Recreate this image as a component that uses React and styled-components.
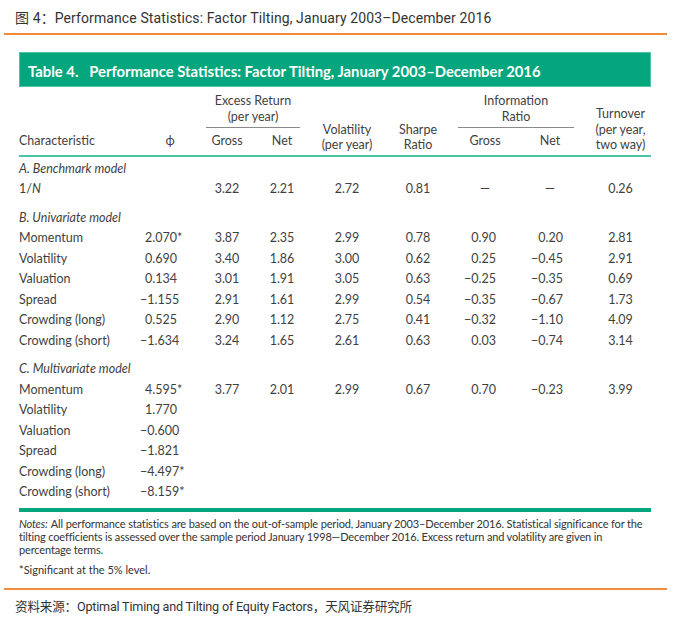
import React from 'react';
import styled, { createGlobalStyle } from 'styled-components';

const GlobalStyle = createGlobalStyle`
  html, body { margin: 0; padding: 0; background: #fff; }
  body { font-family: Lato, "Noto Sans CJK SC", sans-serif; }
`;

const Page = styled.div`
  width: 700px;
  height: 630px;
  background: #fff;
  padding-top: 8px;
  box-sizing: border-box;
`;

const Caption = styled.div`
  margin-left: 15px;
  font-family: Roboto, "Noto Sans CJK SC", sans-serif;
  font-size: 14px;
  line-height: 20px;
  color: #333;
  letter-spacing: 0.1px;
`;

const Rule = styled.div`
  margin: ${p => p.$mt}px 0 0 4px;
  width: 663px;
  height: 2px;
  background: #f28b3b;
`;

const Table = styled.div`
  margin: 17px 0 0 19px;
  width: 632px;
  color: #3f3f3f;
  font-family: Lato, sans-serif;
`;

const TitleBar = styled.div`
  height: 35px;
  background: #04a67e;
  box-shadow: inset 0 0 0 1px #4fc4a6;
  color: #fff;
  font-weight: 700;
  font-size: 14.8px;
  display: flex;
  align-items: center;
  padding: 2px 0 0 9px;
  box-sizing: border-box;
  white-space: pre;
`;

const Grid = styled.div`
  display: grid;
  grid-template-columns: 121px 60px 54px 56px 74px 68px 66px 64px 69px;
  font-size: 12.5px;
`;

const Head = styled.div`
  display: contents;
`;

const HeadCell = styled.div`
  grid-row: ${p => p.$row || '1 / span 2'};
  grid-column: ${p => p.$col};
  align-self: end;
  text-align: ${p => p.$align || 'center'};
  line-height: 15.5px;
  padding-left: ${p => p.$pl || 0}px;
  padding-top: ${p => (p.$row ? 5 : 0)}px;
  padding-bottom: ${p => p.$pb ?? 6}px;
`;

const GroupHead = styled.div`
  grid-row: 1;
  grid-column: ${p => p.$col};
  text-align: center;
  line-height: 15.5px;
  padding-top: 6px;
  padding-bottom: 3px;
  margin: 0 ${p => p.$mr}px 0 ${p => p.$ml}px;
  border-bottom: 1px solid #8a8a8a;
`;

const HeadRule = styled.div`
  grid-column: 1 / -1;
  height: 2px;
  background: #4cc3a5;
`;

const Section = styled.div`
  grid-column: 1 / -1;
  font-style: italic;
  line-height: 20.5px;
  padding-top: ${p => p.$pt}px;
`;

const Cell = styled.div`
  line-height: 20.5px;
  text-align: ${p => p.$align || 'center'};
  padding-right: ${p => p.$pr || 0}px;
  padding-left: ${p => p.$pl || 0}px;
  white-space: nowrap;
`;

const Star = styled.span`
  display: inline-block;
  width: 0;
  overflow: visible;
`;

const BottomRule = styled.div`
  height: 4px;
  background: #04a67e;
  margin-top: 5px;
`;

const Notes = styled.div`
  margin-top: 5px;
  font-size: 11px;
  line-height: 13px;
  color: #333;
  letter-spacing: -0.15px;
  padding-right: 6px;
`;

const NoteLabel = styled.i`
  padding-right: 1px;
`;

const Footnote = styled.div`
  margin-top: 7px;
  font-size: 11px;
  line-height: 13px;
  color: #333;
`;

const Source = styled.div`
  margin: 8px 0 0 15px;
  font-family: Roboto, "Noto Sans CJK SC", sans-serif;
  font-size: 12.6px;
  line-height: 18px;
  color: #333;
  letter-spacing: -0.2px;
`;

const Phi = ({ v }) => {
  const star = v.endsWith('*');
  return (
    <Cell $align="right" $pr={23}>
      {star ? v.slice(0, -1) : v}
      {star && <Star>*</Star>}
    </Cell>
  );
};

const IR = ({ v, pr }) =>
  v === '–' ? <Cell $pl={pr - 22}>—</Cell> : <Cell $align="right" $pr={pr}>{v}</Cell>;

const Row = ({ r }) => (
  <>
    <Cell $align="left">{r[0]}</Cell>
    <Phi v={r[1] || ''} />
    <Cell>{r[2]}</Cell>
    <Cell>{r[3]}</Cell>
    <Cell>{r[4]}</Cell>
    <Cell>{r[5]}</Cell>
    <IR v={r[6]} pr={22} />
    <IR v={r[7]} pr={19} />
    <Cell $pl={8}>{r[8]}</Cell>
  </>
);

const M = '\u2212';

const uni = [
  ['Momentum', '2.070*', '3.87', '2.35', '2.99', '0.78', '0.90', '0.20', '2.81'],
  ['Volatility', '0.690', '3.40', '1.86', '3.00', '0.62', '0.25', `${M}0.45`, '2.91'],
  ['Valuation', '0.134', '3.01', '1.91', '3.05', '0.63', `${M}0.25`, `${M}0.35`, '0.69'],
  ['Spread', `${M}1.155`, '2.91', '1.61', '2.99', '0.54', `${M}0.35`, `${M}0.67`, '1.73'],
  ['Crowding (long)', '0.525', '2.90', '1.12', '2.75', '0.41', `${M}0.32`, `${M}1.10`, '4.09'],
  ['Crowding (short)', `${M}1.634`, '3.24', '1.65', '2.61', '0.63', '0.03', `${M}0.74`, '3.14'],
];

const multi = [
  ['Momentum', '4.595*', '3.77', '2.01', '2.99', '0.67', '0.70', `${M}0.23`, '3.99'],
  ['Volatility', '1.770'],
  ['Valuation', `${M}0.600`],
  ['Spread', `${M}1.821`],
  ['Crowding (long)', `${M}4.497*`],
  ['Crowding (short)', `${M}8.159*`],
];

export default function App() {
  return (
    <Page>
      <GlobalStyle />
      <Caption>图 4：Performance Statistics: Factor Tilting, January 2003–December 2016</Caption>
      <Rule $mt={5} />
      <Table>
        <TitleBar>{'Table 4.   Performance Statistics: Factor Tilting, January 2003–December 2016'}</TitleBar>
        <Grid>
          <Head>
            <GroupHead $col="3 / span 2" $ml={6} $mr={10}>Excess Return<br />(per year)</GroupHead>
            <GroupHead $col="7 / span 2" $ml={6} $mr={8}>Information<br />Ratio</GroupHead>
            <HeadCell $col="1" $align="left">Characteristic</HeadCell>
            <HeadCell $col="2">ϕ</HeadCell>
            <HeadCell $col="3" $row="2">Gross</HeadCell>
            <HeadCell $col="4" $row="2">Net</HeadCell>
            <HeadCell $col="5" $pb={2}>Volatility<br />(per year)</HeadCell>
            <HeadCell $col="6" $pb={2}>Sharpe<br />Ratio</HeadCell>
            <HeadCell $col="7" $row="2">Gross</HeadCell>
            <HeadCell $col="8" $row="2">Net</HeadCell>
            <HeadCell $col="9" $pl={8} $pb={2}>Turnover<br />(per year,<br />two way)</HeadCell>
          </Head>
          <HeadRule />
          <Section $pt={2}>A. Benchmark model</Section>
          <Row r={[<>1/<i>N</i></>, '', '3.22', '2.21', '2.72', '0.81', '–', '–', '0.26']} />
          <Section $pt={8}>B. Univariate model</Section>
          {uni.map(r => <Row key={r[0]} r={r} />)}
          <Section $pt={8}>C. Multivariate model</Section>
          {multi.map(r => <Row key={r[0]} r={r} />)}
        </Grid>
        <BottomRule />
        <Notes>
          <NoteLabel>Notes:</NoteLabel> All performance statistics are based on the out-of-sample period, January 2003–December 2016. Statistical significance for the tilting coefficients is assessed over the sample period January 1998—December 2016. Excess return and volatility are given in percentage terms.
        </Notes>
        <Footnote>*Significant at the 5% level.</Footnote>
      </Table>
      <Rule $mt={12} />
      <Source>资料来源：Optimal Timing and Tilting of Equity Factors，天风证券研究所</Source>
    </Page>
  );
}
